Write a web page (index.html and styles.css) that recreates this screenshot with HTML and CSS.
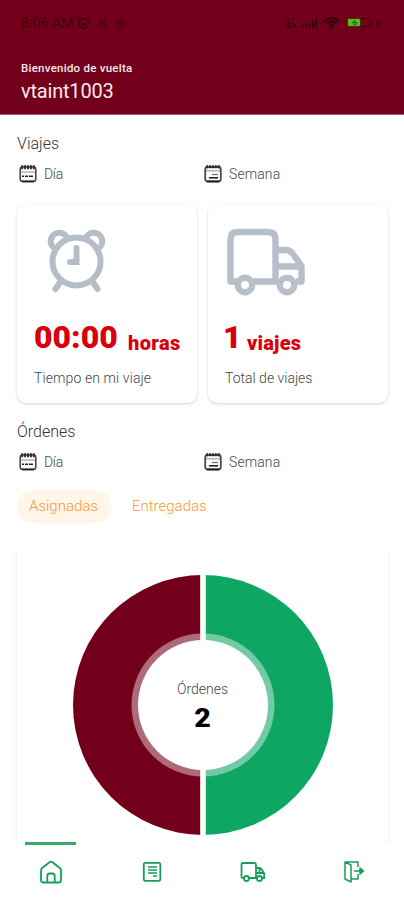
FILE: index.html
```html
<!DOCTYPE html>
<html lang="es">
<head>
<meta charset="utf-8">
<title>Inicio</title>
<link rel="stylesheet" href="styles.css">
</head>
<body>
<svg class="defs" width="0" height="0">
  <symbol id="day" viewBox="0 0 18 18"><rect x="1.2" y="2" width="15.6" height="14.500" rx="2.5" fill="none" stroke="#4a4a4e" stroke-width="1.6"/><path d="M3.2 .2v4M6.1 .2v4M9 .2v4M11.9 .2v4M14.8 .2v4" stroke="#29292d" stroke-width="1.9"/><path d="M2 7h14" stroke="#aaa" stroke-width="1.4"/><path d="M3 11.3h2M6 11.3h3M10 11.3h4" stroke="#222" stroke-width="1.5"/><path d="M3 16.4h12" stroke="#222" stroke-width="1.8"/></symbol>
  <symbol id="week" viewBox="0 0 18 18"><rect x="1.2" y="2" width="15.6" height="14.500" rx="2.5" fill="none" stroke="#4a4a4e" stroke-width="1.8"/><path d="M3.2 .2v3M6.1 .2v3M9 .2v3M11.9 .2v3M14.8 .2v3" stroke="#29292d" stroke-width="1.9"/><path d="M2 5.8h14" stroke="#aaa" stroke-width="1.4"/><path d="M8 9.5h6" stroke="#777" stroke-width="1.3"/><path d="M5 12.8h9" stroke="#222" stroke-width="1.6"/><path d="M3 16.4h12" stroke="#222" stroke-width="1.8"/></symbol>
</svg>
<header class="header">
  <div class="status">
    <span class="time">8:06 AM</span>
    <svg class="status-left" width="52" height="14" viewBox="0 0 52 14" fill="none" stroke="#32000c" stroke-width="1.4"><circle cx="7.500" cy="7.500" r="4.800"/><path d="M1 4l3-3M14 4l-3-3M5.500 7l2 2 2.500-2"/><g stroke="#4b0011" stroke-width="1.1"><circle cx="26" cy="8.5" r="3.3"/><path d="M23 2l2 3M29 2l-2 3M24 8h4"/><circle cx="45" cy="7.5" r="4.2"/><path d="M41 7h8M43 3l4 2M43 10h4"/></g></svg>
    <svg class="status-right" width="100" height="16" viewBox="0 0 100 16" fill="none" stroke="#32000c"><path d="M2 3l3 1M7 3l3 1M5 5l-2 7h3M8 7l-1 5M11 9v4" stroke-width="1.3"/><path d="M18.500 12.500v-2M22 12.500v-3M25.500 12.500v-5M29 12.500v-7M32 12.500v-9" stroke-width="2"/><path d="M40 6q8-6 15 0M42.500 8.500q5-4 10 0M45 11q2.500-2 5 0" stroke-width="2"/><path d="M46 12l1.500 2 1.500-2z" fill="#32000c"/><rect x="63.500" y="3.500" width="13" height="8" rx="1.500" fill="#64b51b" stroke="#28400d"/><path d="M77 3.500h7l3 4-3 4h-7" stroke-width="1"/><path d="M71.500 5.500q-2.500 0-2.500 2.500t2 2 1.500-2.500h-3" stroke="#24500b"/><path d="M95 3l-4 5h3l-1 5 4-6h-3z" fill="#32000c" stroke="none"/></svg>
  </div>
  <div class="welcome">Bienvenido de vuelta</div>
  <div class="user">vtaint1003</div>
</header>
<main class="main">
  <h2 class="title">Viajes</h2>
  <div class="periods">
    <div class="period"><svg width="18" height="18"><use href="#day"/></svg><span class="dia">Día</span></div>
    <div class="period"><svg width="18" height="18"><use href="#week"/></svg><span class="semana">Semana</span></div>
  </div>
  <div class="cards">
    <section class="card">
      <svg class="clock" width="60" height="66" viewBox="0 0 60 66" fill="none" stroke="#b7bdc6" stroke-width="6" stroke-linecap="round"><circle cx="29.500" cy="33.500" r="24"/><path d="M5.500 18.500A8.500 8.500 0 1 1 19 8M40 8A8.500 8.500 0 1 1 53.500 18.500M29.500 20v14h-6.500M12.500 55l-4 6M46.500 55l4 6"/></svg>
      <div class="amount"><b class="hours">00:00</b><strong class="horas">horas</strong></div>
      <p class="caption tiempo">Tiempo en mi viaje</p>
    </section>
    <section class="card card-right">
      <svg class="truck" width="80" height="70" viewBox="0 0 80 70" fill="none" stroke="#b7bfcb" stroke-width="6.400" stroke-linejoin="round"><path d="M11 53.500H4.500V11q0-7 7-7h31q7 0 7 7v42.500H26M50 22h10q4 0 7 4L75.500 38v15.500H70M50 38.500h25"/><circle cx="19" cy="57" r="7.200"/><circle cx="61" cy="57" r="7.200"/></svg>
      <div class="amount"><b class="one">1</b><strong class="viajes">viajes</strong></div>
      <p class="caption total">Total de viajes</p>
    </section>
  </div>
  <h2 class="title orders">Órdenes</h2>
  <div class="periods">
    <div class="period"><svg width="18" height="18"><use href="#day"/></svg><span class="dia">Día</span></div>
    <div class="period"><svg width="18" height="18"><use href="#week"/></svg><span class="semana">Semana</span></div>
  </div>
  <div class="tabs"><span class="tab active">Asignadas</span><span class="tab">Entregadas</span></div>
  <section class="chart">
    <svg class="donut" width="262" height="262" viewBox="0 0 262 262"><path d="M131 1A130 130 0 0 0 131 261Z" fill="#72001b"/><path d="M131 1A130 130 0 0 1 131 261Z" fill="#0da663"/><circle cx="131" cy="131" r="71.500" fill="#fff" fill-opacity=".42"/><circle cx="131" cy="131" r="65" fill="#fff"/><path d="M131 0v262" stroke="#fff" stroke-width="5.600"/></svg>
    <div class="center"><span class="center-label">Órdenes</span><b class="count">2</b></div>
  </section>
</main>
<nav class="nav">
  <a class="item current"><svg width="24" height="26" viewBox="0 0 24 26" fill="none" stroke="#169e59" stroke-width="1.800" stroke-linejoin="round"><path d="M2 11.500Q2 10 3.200 9L10.800 3q1.200-.9 2.400 0L20.800 9Q22 10 22 11.500V21q0 2.500-2.500 2.500h-15Q2 23.500 2 21zM8.300 23.500v-6.500q0-2.500 2.500-2.500h2.400q2.500 0 2.500 2.500v6.500"/></svg></a>
  <a class="item"><svg width="20" height="22" viewBox="0 0 20 22" fill="none" stroke="#169e59" stroke-width="1.800"><rect x="1.800" y="1.800" width="16.500" height="18" rx="1.500"/><path d="M6 6h9M6 9h9M6 12h9M11 15h4" stroke-width="1.300"/></svg></a>
  <a class="item"><svg width="26" height="24" viewBox="0 0 26 24" fill="none" stroke="#169e59" stroke-width="1.800"><path d="M4 18H3q-1.500 0-1.500-1.500v-12Q1.500 3 3 3h11q2 0 2 2v13H9M16 8h3q2 0 3 2l2.200 3.500V18H22M16 13h8M19.500 8v5"/><circle cx="6.500" cy="18.500" r="2.500"/><circle cx="19.500" cy="18.500" r="2.500"/></svg></a>
  <a class="item"><svg width="22" height="24" viewBox="0 0 22 24" fill="none" stroke="#169e59" stroke-width="1.500" stroke-linejoin="round"><path d="M2 2h13v5M2 2v17l6 3V5zM8 19h7v-5M11 11h9"/><path d="M17 8l3.500 3-3.500 3z" fill="#169e59"/></svg></a>
</nav>
</body>
</html>
```
FILE: styles.css
```css
* { box-sizing: border-box; }
body { margin: 0; width: 404px; height: 900px; overflow: hidden; display: flex; flex-direction: column; background: #fff; font-family: Roboto, "Liberation Sans", sans-serif; white-space: nowrap; }
.defs { position: absolute; }
.header { height: 115px; flex: none; background: #72001b; border-bottom: 1px solid #a75b6c; padding: 14px 20px 0 21px; color: #f6e9ec; }
.status { display: flex; align-items: center; height: 18px; }
.time { font-size: 14px; line-height: 18px; width: 54px; letter-spacing: .1px; color: #42000f; }
.status-left { margin-left: 1px; }
.status-right { margin-left: auto; }
.welcome { margin-top: 29px; font-size: 11.5px; font-weight: 500; line-height: 15px; letter-spacing: .25px; }
.user { margin-top: 3px; font-size: 20px; line-height: 24px; letter-spacing: -.2px; }
.main { height: 728px; flex: none; overflow: hidden; padding: 19px 16px 0 17px; }
.title { margin: 0; font-size: 16px; font-weight: 300; line-height: 20px; color: #333; }
.periods { display: grid; grid-template-columns: 185px 1fr; margin-top: 10px; height: 20px; padding-left: 2px; }
.period { display: flex; align-items: center; gap: 7px; color: #444; font-size: 14px; font-weight: 300; }
.period svg { margin-top: -1px; }
.dia { letter-spacing: -.3px; }
.semana { letter-spacing: .1px; }
.cards { display: grid; grid-template-columns: 180px 180px; gap: 11px; margin-top: 20px; }
.card { height: 199px; padding: 24px 17px 0; border-radius: 9px; background: #fff; box-shadow: 0 1px 3px rgba(0,0,0,.18); display: flex; flex-direction: column; align-items: flex-start; }
.clock { margin-left: 13px; height: 66px; }
.truck { margin-left: 1px; margin-bottom: -4px; }
.amount { display: flex; align-items: baseline; height: 40px; margin-top: 23px; color: #d9000b; line-height: 40px; font-weight: 900; }
.hours, .one { font-size: 32px; font-weight: 900; }
.hours { width: 94px; }
.one { width: 22px; margin-left: -2px; margin-right: 2px; }
.horas, .viajes { font-size: 20px; font-weight: 900; position: relative; top: 2px; }
.horas { letter-spacing: .4px; }
.viajes { letter-spacing: .2px; }
.caption { margin: 11px 0 0; font-size: 14px; font-weight: 300; line-height: 20px; color: #444; }
.tiempo { letter-spacing: .1px; }
.orders { margin-top: 19px; }
.tabs { display: flex; gap: 9px; margin-top: 18px; }
.tab { height: 33px; border-radius: 17px; padding: 0 12px; line-height: 33px; color: #f49a35; font-size: 15px; font-weight: 300; }
.active { background: #fff6e8; width: 94px; }
.chart { position: relative; height: 340px; margin-top: 21px; padding-top: 30px; border-radius: 5px; box-shadow: 0 4px 3px rgba(0,0,0,.13); display: flex; justify-content: center; align-items: flex-start; }
.center { position: absolute; top: 135px; left: 0; right: 0; display: flex; flex-direction: column; align-items: center; }
.center-label { font-size: 14px; font-weight: 300; line-height: 20px; color: #444; }
.count { font-size: 26px; font-weight: 900; line-height: 38px; color: #000; transform: scaleX(1.1); }
.nav { height: 57px; flex: none; display: grid; grid-template-columns: repeat(4, 101px); background: #fff; }
.item { display: flex; justify-content: center; align-items: center; }
.current { position: relative; }
.current::before { content: ""; position: absolute; top: -1px; left: 25px; width: 51px; height: 3px; background: #35ab6d; }
```
